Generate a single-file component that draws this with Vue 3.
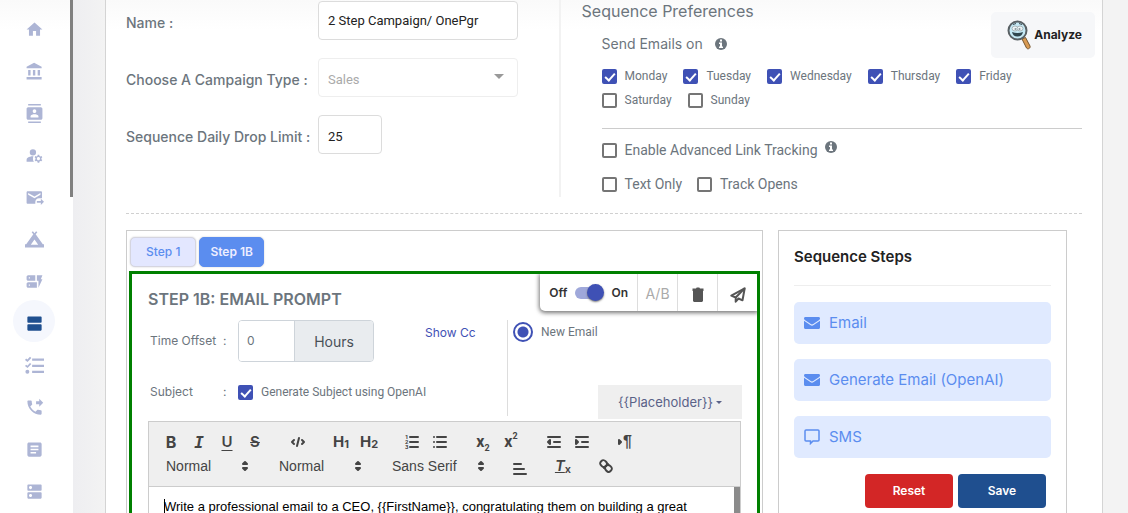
<script setup>
import { ref } from 'vue'

const navItems = [
  { label: 'Home', d: 'M10 20v-6h4v6h5v-8h3L12 3 2 12h3v8z' },
  { label: 'Accounts', d: 'M4 10v7h3v-7H4zm6 0v7h3v-7h-3zM2 22h19v-3H2v3zm14-12v7h3v-7h-3zm-4.5-9L2 6v2h19V6l-9.5-5z' },
  { label: 'Contacts', d: 'M20 0H4v2h16V0zM4 24h16v-2H4v2zM20 4H4c-1.1 0-2 .9-2 2v12c0 1.1.9 2 2 2h16c1.1 0 2-.9 2-2V6c0-1.1-.9-2-2-2zm-8 2.75c1.24 0 2.25 1.01 2.25 2.25s-1.01 2.25-2.25 2.25S9.75 10.24 9.75 9 10.76 6.75 12 6.75zM17 17H7v-1.5c0-1.67 3.33-2.5 5-2.5s5 .83 5 2.5V17z' },
  { label: 'Manage accounts', d: 'M10 4a4 4 0 1 0 0 8 4 4 0 0 0 0-8zM10.67 13.02C10.45 13.01 10.23 13 10 13c-2.42 0-4.68.67-6.61 1.82C2.51 15.34 2 16.32 2 17.35V20h9.26C10.47 18.87 10 17.49 10 16c0-1.07.25-2.07.67-2.98zM20.75 16c0-.22-.03-.42-.06-.63l1.14-1.01-1-1.73-1.45.49c-.32-.27-.68-.48-1.08-.63L18 11h-2l-.3 1.49c-.4.15-.76.36-1.08.63l-1.45-.49-1 1.73 1.14 1.01c-.03.21-.06.41-.06.63s.03.42.06.63l-1.14 1.01 1 1.73 1.45-.49c.32.27.68.48 1.08.63L16 21h2l.3-1.49c.4-.15.76-.36 1.08-.63l1.45.49 1-1.73-1.14-1.01c.03-.21.06-.41.06-.63zM17 18c-1.1 0-2-.9-2-2s.9-2 2-2 2 .9 2 2-.9 2-2 2z' },
  { label: 'Forwarded mail', d: 'M20 4H3.500c-.8 0-1.500.7-1.500 1.500V18.500c0 .8.700 1.500 1.500 1.500H13v-2c0-2.500 1.500-5 5-5h3.500V5.500c0-.8-.7-1.500-1.500-1.500zm-.5 4.500L12 13 4 8.500V6.200l8 4.600 7.500-4.600zM20 13.500l4 4-4 4v-3h-5v-2h5z' },
  { label: 'Campaigns', d: 'M13.500 5.500 15.600 2.700 14 1.500l-2 2.700-2-2.700-1.600 1.200 2.100 2.800L1.500 18H0v4h24v-4h-1.500zM12 12l4.700 6.500H7.300z' },
  { label: 'Dynamic forms', d: 'M17 20v-9h-2V4h7l-2 5h2l-5 11zM15 13v7H4c-1.1 0-2-.9-2-2v-3c0-1.1.9-2 2-2h11zm-8.750 2.750h-1.500v1.500h1.500v-1.500zM13 4v7H4c-1.1 0-2-.9-2-2V6c0-1.1.9-2 2-2h9zM6.250 6.750h-1.500v1.500h1.500v-1.500z' },
  { label: 'Sequences', active: true, d: 'M20 13H4c-.55 0-1 .45-1 1v6c0 .55.45 1 1 1h16c.55 0 1-.45 1-1v-6c0-.55-.45-1-1-1zM20 3H4c-.55 0-1 .45-1 1v6c0 .55.45 1 1 1h16c.55 0 1-.45 1-1V4c0-.55-.45-1-1-1z' },
  { label: 'Checklist', d: 'M9 3h15v3H9zM9 11h15v3H9zM9 18.500h15v3H9zM3 17.500a2.500 2.500 0 1 0 0 5 2.500 2.500 0 0 0 0-5zM6.300 1 8 2.400 3.200 7.500 0 5l1.400-1.700L3 4.500zM6.300 8.700 8 10.100l-4.800 5.100L0 12.700 1.400 11 3 12.200z' },
  { label: 'Calls', d: 'M18 11l5-5-5-5v3h-4v4h4v3zm2 4.500c-1.250 0-2.450-.2-3.570-.57-.35-.11-.74-.03-1.020.24l-2.200 2.200c-2.830-1.440-5.150-3.750-6.590-6.590l2.200-2.210c.28-.26.36-.65.25-1C8.700 6.450 8.500 5.250 8.500 4c0-.55-.45-1-1-1H4c-.55 0-1 .45-1 1 0 9.390 7.610 17 17 17 .55 0 1-.45 1-1v-3.500c0-.55-.45-1-1-1z' },
  { label: 'Articles', d: 'M19 3H5c-1.1 0-2 .9-2 2v14c0 1.1.9 2 2 2h14c1.1 0 2-.9 2-2V5c0-1.1-.9-2-2-2zm-5 14H7v-2h7v2zm3-4H7v-2h10v2zm0-4H7V7h10v2z' },
  { label: 'Servers', d: 'M20 13H4c-.55 0-1 .45-1 1v6c0 .55.45 1 1 1h16c.55 0 1-.45 1-1v-6c0-.55-.45-1-1-1zM7 19c-1.1 0-2-.9-2-2s.9-2 2-2 2 .9 2 2-.9 2-2 2zM20 3H4c-.55 0-1 .45-1 1v6c0 .55.45 1 1 1h16c.55 0 1-.45 1-1V4c0-.55-.45-1-1-1zM7 9c-1.1 0-2-.9-2-2s.9-2 2-2 2 .9 2 2-.9 2-2 2z' }
]

const days = ref([
  { name: 'Monday', on: true },
  { name: 'Tuesday', on: true },
  { name: 'Wednesday', on: true },
  { name: 'Thursday', on: true },
  { name: 'Friday', on: true },
  { name: 'Saturday', on: false },
  { name: 'Sunday', on: false }
])

const campaignName = ref('2 Step Campaign/ OnePgr')
const dropLimit = ref('25')
const offset = ref('0')
const linkTracking = ref(false)
const textOnly = ref(false)
const trackOpens = ref(false)
const generateSubject = ref(true)
const enabled = ref(true)
const pickers = [
  { label: 'Heading', value: 'Normal' },
  { label: 'Size', value: 'Normal' },
  { label: 'Font', value: 'Sans Serif', wide: true }
]
const placeholderLabel = '{{Placeholder}}'
const firstName = '{{FirstName}}'
const steps = [
  { label: 'Email', icon: 'mail' },
  { label: 'Generate Email (OpenAI)', icon: 'mail' },
  { label: 'SMS', icon: 'chat' }
]
</script>

<template>
  <div class="shell">
    <nav class="nav">
      <a v-for="item in navItems" :key="item.label" href="#" :aria-label="item.label" :class="{ active: item.active }">
        <svg viewBox="0 0 24 24"><path :d="item.d" /></svg>
      </a>
    </nav>
    <div class="track"><div class="thumb"></div></div>

    <main class="card">
      <section class="settings">
        <div class="fields">
          <label for="name">Name :</label>
          <input id="name" v-model="campaignName" class="box" type="text" />
          <label for="type">Choose A Campaign Type :</label>
          <div class="select-wrap">
            <select id="type" class="box" disabled><option>Sales</option></select>
            <svg class="caret" viewBox="0 0 10 5"><path d="M0 0h10L5 5z" /></svg>
          </div>
          <label for="limit">Sequence Daily Drop Limit :</label>
          <input id="limit" v-model="dropLimit" class="box short" type="text" />
        </div>

        <div class="prefs">
          <h2>Sequence Preferences</h2>
          <div class="prefs-body">
            <h3>Send Emails on
              <svg class="info" viewBox="0 0 12 12"><circle cx="6" cy="6" r="6" /><path d="M5 1.500h2v2H5zM4 4.500h3v4h1V10H4V8.500h1V6H4z" /></svg>
            </h3>
            <div class="days">
              <label v-for="day in days" :key="day.name"><input v-model="day.on" type="checkbox" />{{ day.name }}</label>
            </div>
            <hr />
            <div class="options">
              <label><input v-model="linkTracking" type="checkbox" />Enable Advanced Link Tracking</label>
              <svg class="info raised" viewBox="0 0 12 12"><circle cx="6" cy="6" r="6" /><path d="M5 1.500h2v2H5zM4 4.500h3v4h1V10H4V8.500h1V6H4z" /></svg>
            </div>
            <div class="options second">
              <label><input v-model="textOnly" type="checkbox" />Text Only</label>
              <label><input v-model="trackOpens" type="checkbox" />Track Opens</label>
            </div>
          </div>
        </div>
      </section>

      <section class="work">
        <div class="steps">
          <div class="tabs">
            <button type="button">Step 1</button>
            <button type="button" class="current">Step 1B</button>
          </div>
          <div class="step">
            <div class="actions">
              <label class="toggle">Off <input v-model="enabled" type="checkbox" role="switch" /> On</label>
              <button type="button" class="ab">A/B</button>
              <button type="button" aria-label="Delete">
                <svg class="trash" viewBox="0 0 12 16"><path d="M1 4h10v9.500c0 .8-.7 1.500-1.500 1.500h-7C1.700 15 1 14.300 1 13.500zM.5 1.500H4L4.700.5h2.600L8 1.500h3.500V4H.5z" /></svg>
              </button>
              <button type="button" aria-label="Send">
                <svg class="plane" viewBox="0 0 16 16"><path d="M14.700 1.300 12.500 13.300 8.500 11.500 5.700 14.700V10.500L1.300 8.600z" /><path d="M14.700 1.300 5.700 10.500" /></svg>
              </button>
            </div>
            <h2>STEP 1B: EMAIL PROMPT</h2>
            <div class="config">
              <div class="left">
                <div class="line">
                  <label class="name" for="offset">Time Offset</label><span class="colon">:</span>
                  <div class="group"><input id="offset" v-model="offset" type="text" /><span>Hours</span></div>
                  <a href="#">Show Cc</a>
                </div>
                <div class="line subject">
                  <span class="name">Subject</span><span class="colon">:</span>
                  <label class="small"><input v-model="generateSubject" type="checkbox" />Generate Subject using OpenAI</label>
                </div>
              </div>
              <div class="right">
                <label class="small"><input type="radio" name="kind" checked />New Email</label>
                <button type="button" class="placeholder">{{ placeholderLabel }}<i></i></button>
              </div>
            </div>

            <div class="editor">
              <div class="toolbar">
                <div class="tools">
                  <div class="set">
                    <button type="button" class="bold">B</button>
                    <button type="button" class="ital">I</button>
                    <button type="button" class="under">U</button>
                    <button type="button" class="strike">S</button>
                  </div>
                  <div class="set">
                    <button type="button" aria-label="Code"><svg viewBox="0 0 18 18"><path d="M5 7 3 9l2 2M13 7l2 2-2 2M10 5 8 13" /></svg></button>
                  </div>
                  <div class="set">
                    <button type="button" class="head">H<small>1</small></button>
                    <button type="button" class="head">H<small>2</small></button>
                  </div>
                  <div class="set">
                    <button type="button" aria-label="Numbered list"><svg viewBox="0 0 18 18"><path d="M7 4h8M7 9h8M7 14h8" /><text x="2" y="6">1</text><text x="2" y="11">2</text><text x="2" y="16">3</text></svg></button>
                    <button type="button" aria-label="Bulleted list"><svg viewBox="0 0 18 18"><path d="M6 4h9M6 9h9M6 14h9M3 4v0M3 9v0M3 14v0" /></svg></button>
                  </div>
                  <div class="set">
                    <button type="button" class="script">x<sub>2</sub></button>
                    <button type="button" class="script">x<sup>2</sup></button>
                  </div>
                  <div class="set">
                    <button type="button" aria-label="Outdent"><svg viewBox="0 0 18 18"><path d="M3 14h12M3 4h12M9 9h6" /><path class="solid" d="M5 7v4L3 9z" /></svg></button>
                    <button type="button" aria-label="Indent"><svg viewBox="0 0 18 18"><path d="M3 14h12M3 4h12M9 9h6" /><path class="solid" d="M3 7v4l2-2z" /></svg></button>
                  </div>
                  <div class="set">
                    <button type="button" class="pilcrow"><svg viewBox="0 0 5 8"><path class="solid" d="M1 2v4l2-2z" /></svg>¶</button>
                  </div>
                </div>
                <div class="tools">
                  <div v-for="p in pickers" :key="p.label" class="picker" :class="{ wide: p.wide }">
                    <select :aria-label="p.label"><option>{{ p.value }}</option></select>
                    <svg viewBox="0 0 18 18"><path class="solid" d="M7 11l2 2 2-2zM7 7l2-2 2 2z" /></svg>
                  </div>
                  <div class="set">
                    <button type="button" aria-label="Align" class="low"><svg viewBox="0 0 18 18"><path d="M3 9h10M3 14h12M3 4h7" /></svg></button>
                  </div>
                  <div class="set"><button type="button" class="clean"><u>T</u><small>x</small></button></div>
                  <div class="set">
                    <button type="button" aria-label="Link"><svg viewBox="0 0 18 18"><path d="M7 11l4-4M8.900 4.577a3.476 3.476 0 0 1 .36 4.679A3.476 3.476 0 0 1 4.577 8.900C3.185 7.500 2.035 6.400 4.217 4.217S7.500 3.185 8.900 4.577ZM13.423 9.100a3.476 3.476 0 0 0-4.679-.36 3.476 3.476 0 0 0 .36 4.679c1.392 1.392 2.500 2.542 4.679.36S14.815 10.500 13.423 9.100Z" /></svg></button>
                  </div>
                </div>
              </div>
              <div class="page">
                <p><span class="cursor"></span>Write a professional email to a CEO, {{ firstName }}, congratulating them on building a great</p>
                <div class="page-scroll"></div>
              </div>
            </div>
          </div>
        </div>

        <aside class="side">
          <h2>Sequence Steps</h2>
          <button v-for="s in steps" :key="s.label" type="button" class="add">
            <svg v-if="s.icon === 'mail'" viewBox="0 0 16 12"><path d="M1.500 0h13C15.500 0 16 .6 16 1.500c0 .6-.3 1-.8 1.400L9.200 7c-.8.600-1.600.600-2.400 0L.8 2.900C.3 2.500 0 2.100 0 1.500 0 .6.500 0 1.500 0zM0 3.700l6.300 4.400c1.100.8 2.300.8 3.400 0L16 3.700v6.800c0 .9-.6 1.500-1.500 1.500h-13C.6 12 0 11.400 0 10.500z" /></svg>
            <svg v-else class="chat" viewBox="0 0 16 16"><path d="M2 1h12c.6 0 1 .4 1 1v9c0 .6-.4 1-1 1H9l-2.500 2.500V12H2c-.6 0-1-.4-1-1V2c0-.6.4-1 1-1z" /></svg>
            {{ s.label }}
          </button>
          <div class="buttons">
            <button type="button" class="reset">Reset</button>
            <button type="button" class="save">Save</button>
          </div>
        </aside>
      </section>
    </main>

    <button type="button" class="analyze">
      <svg viewBox="0 0 24 30">
        <path d="M15 19l3.500-1.500 4.500 8.500c.8 2-2 4-3.500 2z" fill="#d99a52" stroke="#75562f" />
        <circle cx="10.500" cy="10.500" r="9" fill="#c5e9f5" stroke="#596064" stroke-width="2" />
        <ellipse cx="8" cy="8.500" rx="3" ry="2.500" fill="#edf4f6" stroke="#a9b6ba" />
        <ellipse cx="13" cy="8.500" rx="3" ry="2.500" fill="#edf4f6" stroke="#a9b6ba" />
        <circle cx="8.500" cy="9" r="1" fill="#8a979c" /><circle cx="12.500" cy="9" r="1" fill="#8a979c" />
        <path d="M5 12q5.500 2 11 0-1 4.500-5.500 4.500T5 12z" fill="#30464e" />
        <path d="M6 4.500l3-1M12 3.500l3 1" stroke="#37474f" fill="none" />
      </svg>
      Analyze
    </button>
  </div>
</template>

<style>
html, body { margin: 0; overflow: hidden; background: #f2f2f3; }
</style>

<style scoped>
* { box-sizing: border-box; }
.shell { position: relative; display: flex; height: 100vh; overflow: hidden; font: 14px/20px Inter, sans-serif; color: #6c757d; background: linear-gradient(90deg, #eeeef1 73px, #f3f3f3 105px); }
button, input, select { font: inherit; color: inherit; margin: 0; }
button { border: 0; padding: 0; background: none; }
h2, h3, p { margin: 0; font-weight: 400; }
a { text-decoration: none; }

.nav { flex: none; width: 70px; padding: 6px 0 0 13px; background: linear-gradient(#fafafa, #fff 30px); }
.nav a { display: flex; align-items: center; justify-content: center; width: 42px; height: 42px; padding: 5px 0 0 1px; border-radius: 50%; }
.nav svg { width: 19px; height: 19px; fill: #adb5d5; }
.nav .active { background: #f5f7fd; }
.nav .active svg { fill: #1f4f8f; }
.track { flex: none; width: 3px; background: #fff; }
.thumb { height: 197px; background: #808080; }

.card { flex: 1; min-width: 0; margin: 0 25px 0 32px; padding: 0 20px; border: solid #d4d4d4; border-width: 0 1px; background: linear-gradient(#fafafa, #fff 30px); }
.settings { display: grid; grid-template-columns: minmax(0, 5fr) minmax(0, 6fr); height: 214px; border-bottom: 1px dashed #d0d0d0; }
.fields { display: grid; grid-template-columns: 192px minmax(0, 200px); grid-auto-rows: 39px; row-gap: 18px; align-content: start; align-items: center; height: 197px; padding-top: 1px; border-right: 2px solid #f2f2f2; font-weight: 500; }
.fields label { padding-top: 4px; white-space: nowrap; }
.box { width: 100%; height: 39px; padding: 0 9px; border: 1px solid #dcdcdc; border-radius: 4px; background: #fff; color: #222; font: 13px Roboto, sans-serif; }
.short { width: 64px; padding-top: 4px; }
.select-wrap { position: relative; }
select { appearance: none; opacity: 1; }
select.box { border-color: #eee; color: #aaa; padding-top: 4px; }
.caret { position: absolute; right: 14px; top: 16px; width: 10px; height: 5px; fill: #999; }

.prefs { padding: 1px 0 0 21px; }
.prefs h2 { font-size: 16px; line-height: 20px; }
.prefs-body { padding-left: 20px; }
.prefs h3 { display: flex; align-items: center; gap: 12px; margin-top: 13px; font-size: 14px; line-height: 20px; }
.info { width: 12px; height: 12px; fill: #6c757d; }
.info path { fill: #fff; }
.raised { margin: -6px 0 0 -8px; }
label:has(input) { display: inline-flex; align-items: center; gap: 8px; white-space: nowrap; }
input[type='checkbox'] { flex: none; position: relative; appearance: none; width: 15px; height: 15px; border: 2px solid #757575; border-radius: 2px; background: #fff; }
input[type='checkbox']:checked { border-color: #3f51b5; background: #3f51b5; }
input[type='checkbox']:checked::after { content: ''; position: absolute; left: 3px; top: 0; width: 4px; height: 8px; border: solid #fff; border-width: 0 2px 2px 0; transform: rotate(42deg); }
.days { display: flex; flex-wrap: wrap; column-gap: 16px; margin-top: 10px; font: 12px/24px Roboto, sans-serif; }
.prefs hr { margin: 16px 0 11px; border: 0; border-top: 1px solid #ccc; }
.options { display: flex; align-items: center; gap: 15px; font: 14px/20px Roboto, sans-serif; }
.second { margin-top: 14px; }

.work { display: grid; grid-template-columns: minmax(0, 637fr) minmax(0, 289fr); gap: 15px; padding: 16px 15px 0 0; }
.steps { padding: 6px 2px 0; border: 1px solid #ccc; }
.tabs { display: flex; gap: 3px; padding-left: 1px; }
.tabs button { height: 30px; padding: 0 15px; border: 1px solid #d5d5e0; border-radius: 5px; background: #e3e7ff; color: #5b8def; font-size: 12px; font-weight: 500; box-shadow: 0 0 2px #ccc; }
.tabs .current { padding: 0 10px; border-color: #5b8def; background: #5b8def; color: #eef; font-weight: 600; }
.step { position: relative; margin-top: 4px; padding: 15px 16px 0; border: 3px solid #008000; }
.step h2 { font-size: 16px; font-weight: 600; line-height: 20px; }
.actions { position: absolute; top: 0; right: 0; display: flex; height: 37px; border-radius: 0 0 0 5px; background: #fff; box-shadow: 0 1px 4px 1px #777; clip-path: inset(0 0 -8px -8px); color: #333; }
.actions > * + * { width: 40px; border-left: 1px solid #ddd; }
.actions .toggle { gap: 8px; padding: 0 9px; font-size: 12px; font-weight: 600; }
.toggle input[type='checkbox'] { width: 28px; height: 12px; border: 0; border-radius: 6px; background: #9fa8da; }
.toggle input[type='checkbox']::after { content: ''; position: absolute; left: -1px; top: -3px; width: 17px; height: 17px; border: 0; border-radius: 50%; background: #3f51b5; box-shadow: 0 1px 2px #777; transform: none; }
.toggle input[type='checkbox']:checked::after { left: 12px; top: -3px; width: 17px; height: 17px; border: 0; transform: none; }
.actions .ab { padding-top: 3px; color: #aaa; }
.trash { width: 12px; height: 16px; fill: #555; vertical-align: -5px; }
.plane { width: 16px; height: 16px; fill: none; stroke: #555; stroke-width: 2; stroke-linejoin: round; vertical-align: -5px; }

.config { display: flex; padding-top: 11px; font-size: 12px; }
.left { width: 360px; height: 96px; border-right: 1px solid #ddd; }
.line { display: flex; align-items: center; height: 42px; }
.subject { margin-top: 9px; }
.name { width: 75px; padding-left: 2px; }
.colon { width: 15px; }
.group { display: flex; width: 136px; height: 42px; border: 1px solid #ced4da; border-radius: 4px; overflow: hidden; }
.group input { width: 55px; padding: 0 8px; border: 0; font-size: 12px; }
.group span { flex: 1; padding-top: 1px; border-left: 1px solid #ced4da; background: #e9ecef; color: #495057; font-size: 14px; line-height: 40px; text-align: center; }
.line a { margin: -16px 0 0 51px; color: #3f51b5; }
.small { font: 12px/20px Roboto, sans-serif; }
.right { flex: 1; display: flex; flex-direction: column; align-items: flex-start; padding-left: 5px; }
input[type='radio'] { appearance: none; width: 20px; height: 20px; border: 2px solid #3f51b5; border-radius: 50%; background: radial-gradient(#3f51b5 5px, #fff 6px); }
.right > label { margin-top: 2px; }
.placeholder { align-self: flex-end; height: 34px; margin: 43px -1px 0 0; padding: 0 20px; background: #efefef; color: #5a6288; font-size: 13px; font-weight: 400; }
.placeholder i { display: inline-block; margin-left: 3px; border: 3px solid transparent; border-top-color: #5a6288; border-bottom: 0; vertical-align: 3px; }

.editor { margin-top: 2px; border: 1px solid #ccc; }
.toolbar { padding: 8px; border-bottom: 1px solid #ccc; background: #efefef; color: #444; }
.tools { display: flex; gap: 15px; height: 24px; }
.set { display: flex; }
.set button { display: flex; align-items: center; justify-content: center; width: 28px; height: 24px; font: 700 15px/20px Inter, sans-serif; }
.toolbar svg { width: 18px; height: 18px; fill: none; stroke: #444; stroke-width: 2; stroke-linecap: round; stroke-linejoin: round; }
.toolbar .solid { fill: #444; }
.toolbar text { fill: #444; stroke: none; font: 700 6px Roboto, sans-serif; }
.set .bold { font-size: 16px; }
.set .ital { font: italic 700 16px 'DejaVu Sans Mono', monospace; }
.set .under { font-size: 15px; font-weight: 600; text-decoration: underline; text-decoration-thickness: 1px; text-underline-offset: 3px; }
.set .strike { text-decoration: line-through; text-decoration-thickness: 1px; font-weight: 600; }
.head small { padding-top: 3px; font-size: 11px; }
.set .script { font: 700 16px/20px Roboto, sans-serif; }
.script sub, .script sup { align-self: flex-end; font-size: 9px; line-height: 12px; }
.script sup { align-self: flex-start; }
.set .pilcrow { font: 700 16px 'Liberation Sans', sans-serif; }
.pilcrow svg { width: 5px; height: 8px; }
.set .clean { font-weight: 600; font-style: italic; }
.clean small { padding-top: 5px; font-size: 11px; font-style: normal; }
.low { padding-top: 5px; }
.picker { position: relative; width: 98px; }
.wide { width: 108px; }
.picker select { width: 100%; height: 24px; padding: 0 8px 0 9px; border: 0; background: none; font: 14px 'Liberation Sans', sans-serif; }
.picker svg { position: absolute; right: 1px; top: 3px; }
.page { display: flex; justify-content: space-between; height: 180px; }
.page p { padding: 11px 0 0 15px; color: #000; font: 13px/18px 'Liberation Sans', sans-serif; white-space: nowrap; }
.cursor { display: inline-block; width: 1px; height: 15px; margin-right: -1px; background: #000; vertical-align: -3px; }
.page-scroll { width: 6px; background: #8b8b8b; }

.side { padding: 16px 15px 0; border: 1px solid #ccc; height: 400px; }
.side h2 { padding-bottom: 18px; margin-bottom: 16px; border-bottom: 1px solid #eee; color: #222; font-size: 15px; font-weight: 600; line-height: 20px; }
.add { display: flex; align-items: center; gap: 9px; width: 100%; height: 42px; margin-bottom: 15px; padding: 0 10px; border-radius: 5px; background: #e0eaff; color: #5b8def; font-size: 15px; }
.add svg { width: 16px; height: 12px; fill: currentColor; }
.add .chat { height: 16px; fill: none; stroke: currentColor; stroke-width: 1.500; }
.buttons { display: flex; justify-content: flex-end; gap: 5px; padding: 1px 5px 0 0; }
.buttons button { width: 88px; height: 34px; border-radius: 4px; color: #fff; font-size: 12px; font-weight: 600; }
.reset { background: #d32626; }
.save { background: #1f4f8f; }

.analyze { position: absolute; top: 12px; right: 33px; display: flex; align-items: center; gap: 3px; height: 46px; padding: 0 13px 0 16px; border-radius: 5px; background: #f6f7f9; color: #222; font-size: 12px; font-weight: 700; }
.analyze svg { width: 24px; height: 30px; }
</style>
